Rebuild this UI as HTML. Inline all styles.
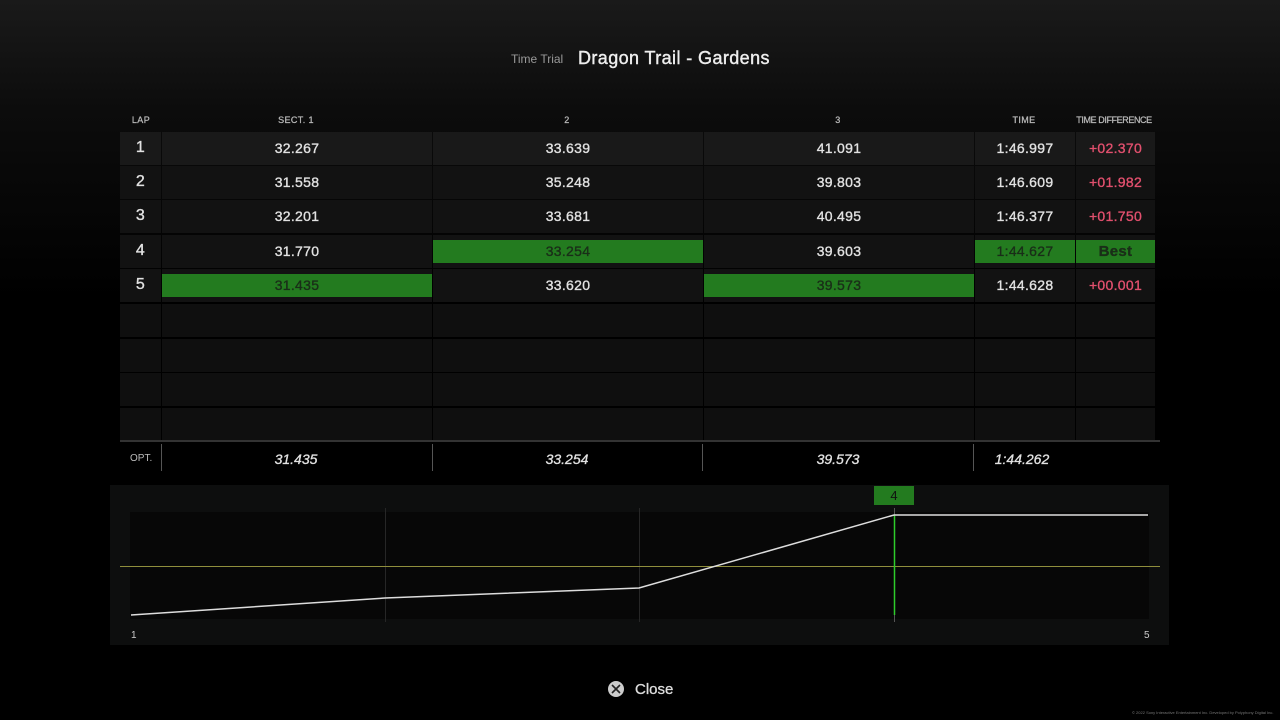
<!DOCTYPE html>
<html><head><meta charset="utf-8"><style>
*{margin:0;padding:0;box-sizing:border-box}
body{width:1280px;height:720px;overflow:hidden;background:linear-gradient(#1a1a1a 0px,#0c0c0c 110px,#000 300px);font-family:"Liberation Sans",sans-serif;color:#e2e2e2;position:relative}
.a{position:absolute}
.row{position:absolute;left:120px;height:33px;display:flex;gap:1px}
.row div{height:33px;background:#121212;display:flex;align-items:center;justify-content:center;font-size:14px;letter-spacing:.3px;-webkit-text-stroke:.35px currentColor;padding-bottom:1px}
.row div:nth-child(1){width:41px;font-size:16px}
.row div:nth-child(2),.row div:nth-child(3),.row div:nth-child(4){width:270px}
.row div:nth-child(5){width:100px}
.row div:nth-child(6){width:79px}
.r1 div{background:#191919}
.e div{background:#0f0f0f}
.row div.g{background:#121212 linear-gradient(#237b1f,#237b1f) no-repeat;background-size:100% 23px;background-position:0 5px;color:#1a2e18}
.p{color:#e2506e}
.hd{position:absolute;top:115px;font-size:9px;color:#bbb;letter-spacing:.4px;transform:translateX(-50%);-webkit-text-stroke:.25px currentColor}
.opt{position:absolute;top:451px;font-size:14px;font-style:italic;transform:translateX(-50%);-webkit-text-stroke:.3px currentColor}
.vs{position:absolute;top:444px;width:1px;height:27px;background:#555}
</style></head><body>
<div class="a" style="left:511px;top:52px;font-size:12px;color:#999">Time Trial</div>
<div class="a" style="left:578px;top:48px;font-size:18px;color:#eee;letter-spacing:.4px;-webkit-text-stroke:.4px #eee">Dragon Trail - Gardens</div>

<div class="hd" style="left:141px">LAP</div>
<div class="hd" style="left:296px">SECT. 1</div>
<div class="hd" style="left:567px">2</div>
<div class="hd" style="left:838px">3</div>
<div class="hd" style="left:1024px">TIME</div>
<div class="hd" style="left:1114px;letter-spacing:-.4px">TIME DIFFERENCE</div>

<div class="row r1" style="top:132px"><div>1</div><div>32.267</div><div>33.639</div><div>41.091</div><div>1:46.997</div><div class="p">+02.370</div></div>
<div class="row" style="top:166px"><div>2</div><div>31.558</div><div>35.248</div><div>39.803</div><div>1:46.609</div><div class="p">+01.982</div></div>
<div class="row" style="top:200px"><div>3</div><div>32.201</div><div>33.681</div><div>40.495</div><div>1:46.377</div><div class="p">+01.750</div></div>
<div class="row" style="top:235px"><div>4</div><div>31.770</div><div class="g">33.254</div><div>39.603</div><div class="g">1:44.627</div><div class="g" style="font-weight:bold;font-size:15px">Best</div></div>
<div class="row" style="top:269px"><div>5</div><div class="g">31.435</div><div>33.620</div><div class="g">39.573</div><div>1:44.628</div><div class="p">+00.001</div></div>
<div class="row e" style="top:304px"><div></div><div></div><div></div><div></div><div></div><div></div></div>
<div class="row e" style="top:339px"><div></div><div></div><div></div><div></div><div></div><div></div></div>
<div class="row e" style="top:373px"><div></div><div></div><div></div><div></div><div></div><div></div></div>
<div class="row e" style="top:408px"><div></div><div></div><div></div><div></div><div></div><div></div></div>
<div class="a" style="left:120px;top:440px;width:1040px;height:2px;background:#333"></div>

<div class="a" style="left:130px;top:453px;font-size:10px;color:#bbb">OPT.</div>
<div class="vs" style="left:161px"></div><div class="vs" style="left:432px"></div><div class="vs" style="left:702px"></div><div class="vs" style="left:973px"></div>
<div class="opt" style="left:296px">31.435</div>
<div class="opt" style="left:567px">33.254</div>
<div class="opt" style="left:838px">39.573</div>
<div class="opt" style="left:1022px">1:44.262</div>

<div class="a" style="left:110px;top:485px;width:1059px;height:160px;background:#0d0e0e"></div>
<svg class="a" style="left:0;top:0" width="1280" height="720">
<rect x="130" y="512" width="1019" height="107" fill="#070707"/>
<line x1="385.5" y1="508" x2="385.5" y2="622" stroke="#262626" stroke-width="1"/>
<line x1="639.5" y1="508" x2="639.5" y2="622" stroke="#262626" stroke-width="1"/>
<line x1="894.5" y1="508" x2="894.5" y2="622" stroke="#555" stroke-width="1"/>
<line x1="120" y1="566.5" x2="1160" y2="566.5" stroke="#8f8e3c" stroke-width="1"/>
<line x1="894.5" y1="515" x2="894.5" y2="615" stroke="#2ecc2a" stroke-width="1.5"/>
<polyline points="131,615 385,598 639,588 894,515 1148,515" fill="none" stroke="#ddd" stroke-width="1.5"/>
<rect x="874" y="486" width="40" height="19" fill="#237b1f"/>
<text x="894" y="500" font-family="Liberation Sans" font-size="13" fill="#111" text-anchor="middle">4</text>
<text x="131" y="638" font-family="Liberation Sans" font-size="10" fill="#ccc">1</text>
<text x="1144" y="638" font-family="Liberation Sans" font-size="10" fill="#ccc">5</text>
<circle cx="616" cy="689" r="8" fill="#ccc"/>
<path d="M612,685 L620,693 M620,685 L612,693" stroke="#222" stroke-width="1.6"/>
</svg>
<div class="a" style="left:635px;top:681px;font-size:15px;color:#ddd;-webkit-text-stroke:.3px #ddd">Close</div>
<div class="a" style="left:1132px;top:710px;font-size:4px;color:#777">© 2022 Sony Interactive Entertainment Inc. Developed by Polyphony Digital Inc.</div>
</body></html>
